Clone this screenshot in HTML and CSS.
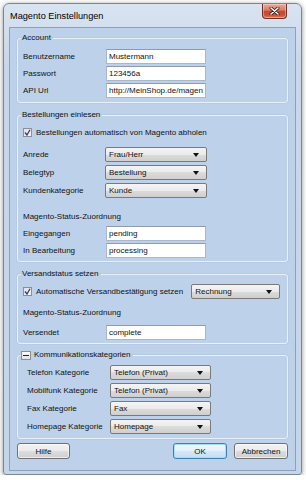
FILE: index.html
```html
<!DOCTYPE html>
<html lang="de">
<head>
<meta charset="utf-8">
<title>Magento Einstellungen</title>
<link rel="stylesheet" href="styles.css">
</head>
<body>
<div class="window">
  <div class="titlebar">
    <span class="title">Magento Einstellungen</span>
    <div class="close">
      <svg width="11" height="8" viewBox="0 0 11 8"><path d="M2 1 L9 7 M9 1 L2 7" stroke="#3b1a14" stroke-width="3" stroke-linecap="round"/><path d="M2 1 L9 7 M9 1 L2 7" stroke="#fff" stroke-width="1.6" stroke-linecap="round"/></svg>
    </div>
  </div>
  <div class="client">
    <fieldset class="group g1">
      <legend>Account</legend>
      <div class="row"><span class="lbl">Benutzername</span><div class="input">Mustermann</div></div>
      <div class="row gap2"><span class="lbl">Passwort</span><div class="input">123456a</div></div>
      <div class="row gap2"><span class="lbl">API Url</span><div class="input url">http://MeinShop.de/magen</div></div>
    </fieldset>

    <fieldset class="group g2">
      <legend>Bestellungen einlesen</legend>
      <div class="check-row">
        <span class="checkbox"><svg width="7" height="7" viewBox="0 0 7 7"><path d="M1 3.5 L3 6 L6 0.8" fill="none" stroke="#2d3f73" stroke-width="1.3"/></svg></span>
        <span>Bestellungen automatisch von Magento abholen</span>
      </div>
      <div class="row combos-start"><span class="lbl">Anrede</span><div class="combo"><span>Frau/Herr</span><i class="arrow"></i></div></div>
      <div class="row gap3"><span class="lbl">Belegtyp</span><div class="combo"><span>Bestellung</span><i class="arrow"></i></div></div>
      <div class="row gap3"><span class="lbl">Kundenkategorie</span><div class="combo"><span>Kunde</span><i class="arrow"></i></div></div>
      <div class="section-lbl s2">Magento-Status-Zuordnung</div>
      <div class="row gap3"><span class="lbl">Eingegangen</span><div class="input">pending</div></div>
      <div class="row gap2"><span class="lbl">In Bearbeitung</span><div class="input">processing</div></div>
    </fieldset>

    <fieldset class="group g3">
      <legend>Versandstatus setzen</legend>
      <div class="row">
        <span class="checkbox"><svg width="7" height="7" viewBox="0 0 7 7"><path d="M1 3.5 L3 6 L6 0.8" fill="none" stroke="#2d3f73" stroke-width="1.3"/></svg></span>
        <span class="chk-text">Automatische Versandbestätigung setzen</span>
        <div class="combo wide"><span>Rechnung</span><i class="arrow"></i></div>
      </div>
      <div class="section-lbl s3">Magento-Status-Zuordnung</div>
      <div class="row gap6"><span class="lbl">Versendet</span><div class="input">complete</div></div>
    </fieldset>

    <fieldset class="group g4">
      <legend><span class="minus"></span>Kommunikationskategorien</legend>
      <div class="row"><span class="lbl">Telefon Kategorie</span><div class="combo"><span>Telefon (Privat)</span><i class="arrow"></i></div></div>
      <div class="row gap3"><span class="lbl">Mobilfunk Kategorie</span><div class="combo"><span>Telefon (Privat)</span><i class="arrow"></i></div></div>
      <div class="row gap3"><span class="lbl">Fax Kategorie</span><div class="combo"><span>Fax</span><i class="arrow"></i></div></div>
      <div class="row gap3"><span class="lbl">Homepage Kategorie</span><div class="combo"><span>Homepage</span><i class="arrow"></i></div></div>
    </fieldset>

    <div class="buttons">
      <div class="btn">Hilfe</div>
      <div class="spacer"></div>
      <div class="btn ok">OK</div>
      <div class="btn">Abbrechen</div>
    </div>
  </div>
</div>
</body>
</html>
```

FILE: styles.css
```css
* { box-sizing: border-box; }
body {
  margin: 0;
  background: #ffffff;
  font-family: "Liberation Sans", Arial, sans-serif;
  font-size: 8px;
  color: #111;
}
.window {
  margin: 3px 0 0 3px;
  width: 299px;
  height: 472px;
  border: 1px solid #76879a;
  border-radius: 6px 6px 3px 3px;
  background: linear-gradient(#d9e4f1, #c8d7e9 60px, #c5d5e8);
  box-shadow: 0 1px 5px rgba(0,0,0,0.45);
  display: flex;
  flex-direction: column;
}
.titlebar {
  height: 23px;
  display: flex;
  justify-content: space-between;
  align-items: flex-start;
  padding-left: 6px;
}
.title {
  font-size: 9.2px;
  line-height: 10px;
  margin-top: 7px;
  color: #000;
}
.close {
  width: 25px;
  height: 15px;
  margin-right: 14px;
  border: 1px solid #6e3026;
  border-top: none;
  border-radius: 0 0 4px 4px;
  background: linear-gradient(#e9a898, #d97a66 45%, #c8462f 50%, #c9513a 80%, #dc7a60);
  display: flex;
  align-items: center;
  justify-content: center;
  box-shadow: inset 0 0 0 1px rgba(255,255,255,0.35);
}
.close svg { display: block; }
.client {
  margin: 0 5px;
  height: 444px;
  border: 1px solid #8fa1b6;
  background: #bdd1ea;
  padding: 5px 7px 0 7px;
}
.group {
  margin: 0;
  border: 1px solid #eaf0f8;
  border-radius: 3px;
  padding: 0 5px 4px 5px;
  min-width: 0;
  box-shadow: 0 0 0 0.5px rgba(150,170,195,0.35);
}
.group legend {
  font-size: 8px;
  line-height: 10px;
  height: 10px;
  padding: 0 2px 0 1px;
  margin-left: -2px;
}
.g1 { padding-top: 6px; padding-bottom: 4px; }
.g2 { margin-top: 7px; padding-top: 6px; padding-bottom: 3px; }
.g3 { margin-top: 7px; padding-top: 5px; padding-bottom: 3px; }
.g4 { margin-top: 6px; padding: 5px 5px 4px 9px; }
.g4 legend { margin-left: -6px; display: flex; align-items: center; padding-left: 0; }
.row {
  display: flex;
  align-items: center;
  height: 15px;
}
.gap2 { margin-top: 2px; }
.gap3 { margin-top: 3px; }
.gap6 { margin-top: 6px; }
.combos-start { margin-top: 9px; }
.lbl {
  width: 83px;
  flex: none;
  white-space: nowrap;
}
.input {
  width: 100px;
  height: 15px;
  background: #fff;
  border: 1px solid #a9b7c9;
  border-top-color: #8e9bab;
  padding: 0 2px;
  line-height: 13px;
  white-space: nowrap;
  overflow: hidden;
}
.input.url { padding-right: 0; }
.combo {
  width: 102px;
  height: 15px;
  margin-left: -1px;
  border: 1px solid #7a7a7a;
  border-radius: 2px;
  background: linear-gradient(#f4f4f4, #ebebeb 50%, #dcdcdc 50%, #cfcfcf);
  display: flex;
  align-items: center;
  justify-content: space-between;
  padding: 0 7px 0 3px;
  line-height: 13px;
  white-space: nowrap;
}
.g4 .combo { width: 101px; margin-left: 0; }
.combo.wide { width: 89px; margin-left: 0; }
.arrow {
  width: 0;
  height: 0;
  border-left: 3.5px solid transparent;
  border-right: 3.5px solid transparent;
  border-top: 4px solid #111;
}
.check-row {
  display: flex;
  align-items: center;
  height: 12px;
}
.checkbox {
  width: 9px;
  height: 9px;
  flex: none;
  border: 1px solid #8e8f8f;
  background: linear-gradient(135deg, #dfe1e5, #f6f6f6);
  margin-right: 4px;
  display: flex;
  align-items: center;
  justify-content: center;
}
.checkbox svg { display: block; }
.chk-text { margin-right: 8px; white-space: nowrap; }
.section-lbl {
  height: 12px;
  line-height: 12px;
}
.s2 { margin-top: 13px; }
.s3 { margin-top: 8px; }
.minus {
  width: 10px;
  height: 9px;
  border: 1px solid #8e8f8f;
  background: linear-gradient(#fbfbfb, #e3e3e3);
  margin-right: 3px;
  display: inline-block;
  position: relative;
}
.minus::after {
  content: "";
  position: absolute;
  left: 1px;
  right: 1px;
  top: 3px;
  height: 1px;
  background: #222;
}
.buttons {
  display: flex;
  margin-top: 4px;
  gap: 7px;
}
.spacer { flex: 1; }
.btn {
  width: 54px;
  height: 16px;
  border: 1px solid #707070;
  border-radius: 3px;
  background: linear-gradient(#f2f2f2, #ebebeb 50%, #dddddd 50%, #cfcfcf);
  box-shadow: inset 0 0 0 1px rgba(255,255,255,0.6);
  display: flex;
  align-items: center;
  justify-content: center;
  font-size: 8px;
}
.btn:first-child { width: 53px; }
.btn.ok {
  border-color: #3c7fb1;
  box-shadow: inset 0 0 0 1px #a9dcf5;
  background: linear-gradient(#f0f7fc, #e4f1fa 50%, #d2e8f7 50%, #c4e0f3);
}
```
